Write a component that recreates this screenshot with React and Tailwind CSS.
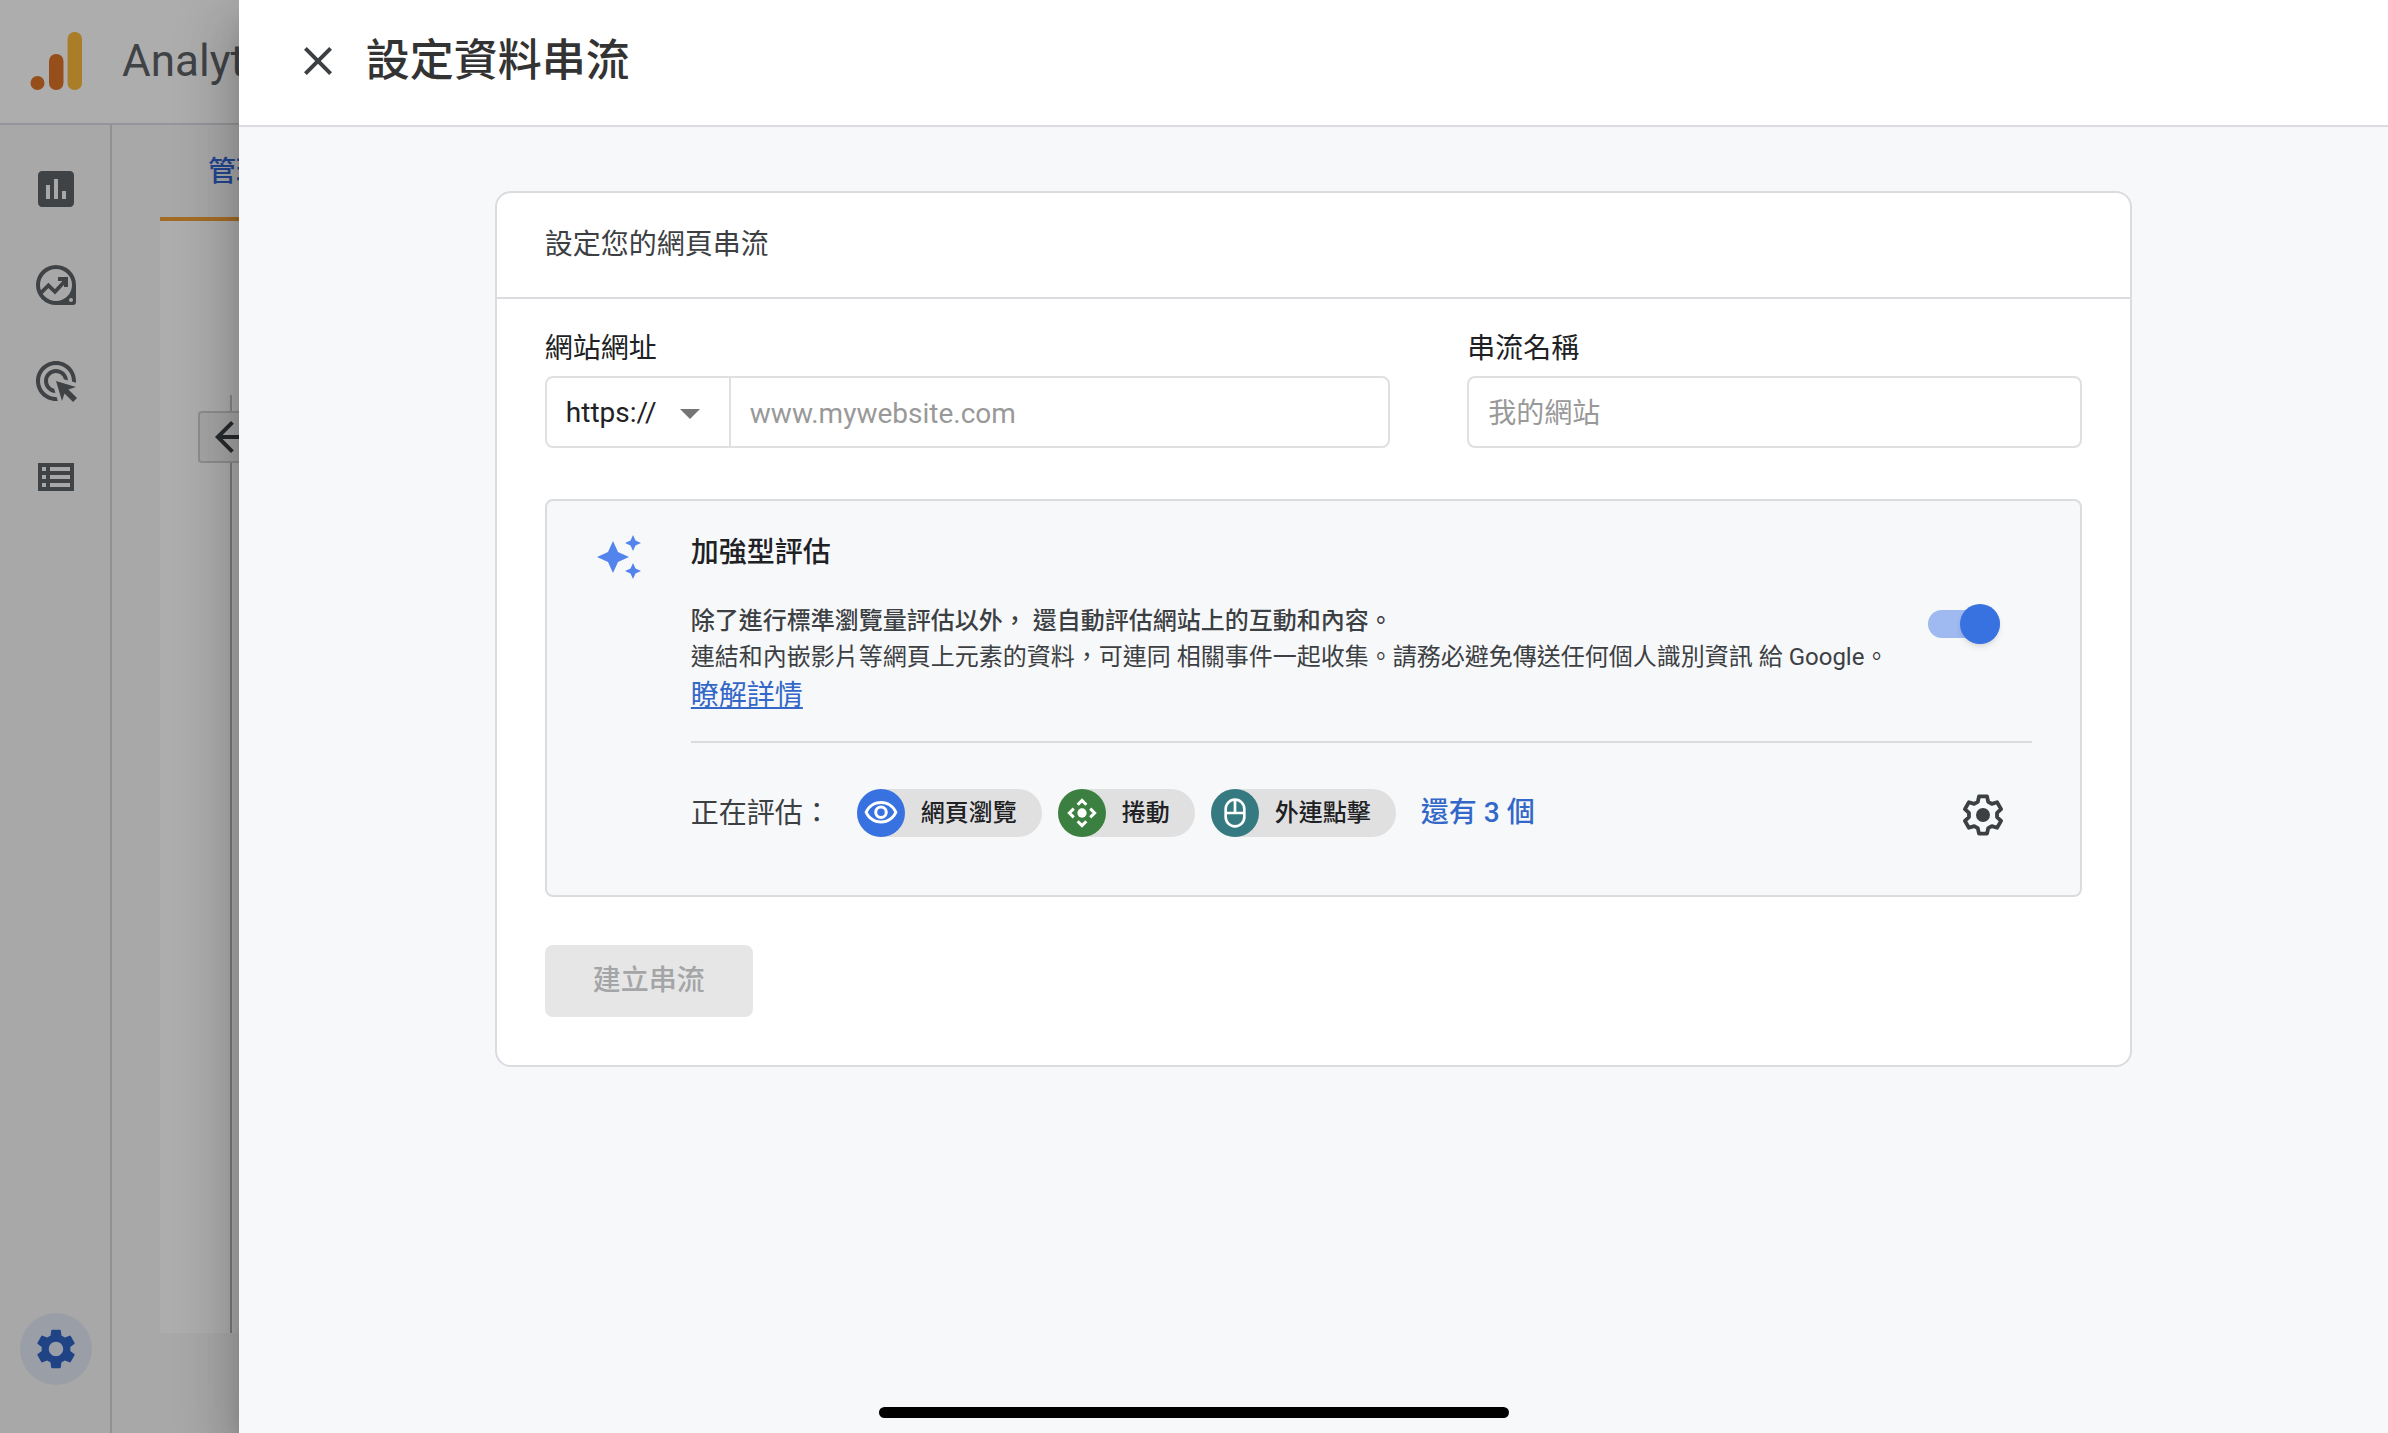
import { useState } from 'react'
import {
  MdAdsClick,
  MdArrowBack,
  MdArrowDropDown,
  MdAutoAwesome,
  MdClose,
  MdInsertChart,
  MdOutlineVisibility,
  MdSettings,
} from 'react-icons/md'

function AnalyticsLogo() {
  return (
    <svg viewBox="0 0 52 58" className="h-[58px] w-[52px]" aria-hidden="true">
      <circle cx="7.5" cy="51" r="7" fill="#dd7527" />
      <rect x="19" y="22" width="14.5" height="36" rx="7" fill="#dd7527" />
      <rect x="37.5" y="0" width="14.5" height="58" rx="7" fill="#fbb93c" />
    </svg>
  )
}

function ExploreIcon() {
  return (
    <svg viewBox="0 0 24 24" className="size-12" fill="currentColor" aria-hidden="true">
      <path
        fillRule="evenodd"
        d="M12 2a10 10 0 0 0 0 20h8.5a1.5 1.5 0 0 0 1.5-1.5V12A10 10 0 0 0 12 2zm0 2a8 8 0 1 1 0 16 8 8 0 0 1 0-16zm7.5 14.5a1 1 0 1 1 0 2 1 1 0 0 1 0-2z"
      />
      <path d="M4.6 15.8l3.6-3.6 3.3 3.2 5-5.4" fill="none" stroke="currentColor" strokeWidth="1.9" />
      <path d="M13 8h5v5z" />
      <path d="M13 8h5v5h-2v-3h-3z" />
    </svg>
  )
}

function ListIcon() {
  return (
    <svg viewBox="0 0 24 24" className="size-12" fill="currentColor" aria-hidden="true">
      <path
        fillRule="evenodd"
        d="M3 5h18v14H3zM5 7v2h2V7zm0 4v2h2v-2zm0 4v2h2v-2zM9 7v2h10V7zm0 4v2h10v-2zm0 4v2h10v-2z"
      />
    </svg>
  )
}

function GearIcon() {
  return (
    <svg viewBox="-12 -12 24 24" className="size-12" aria-hidden="true">
      <path
        d="M-2.6-6.6L-2-9.3H2L2.6-6.6 4.42-5.55 7.05-6.38 9.05-2.92 7.02-1.05V1.05L9.05 2.92 7.05 6.38 4.42 5.55 2.6 6.6 2 9.3H-2L-2.6 6.6-4.42 5.55-7.05 6.38-9.05 2.92-7.02 1.05V-1.05L-9.05-2.92-7.05-6.38-4.42-5.55z"
        fill="none"
        stroke="currentColor"
        strokeWidth="1.9"
        strokeLinejoin="round"
      />
      <circle r="3.5" fill="currentColor" />
    </svg>
  )
}

function ScrollIcon() {
  return (
    <svg viewBox="-12 -12 24 24" className="size-9" aria-hidden="true">
      <circle r="3.1" fill="currentColor" />
      <path
        d="M-2.9-5.5L0-8.4 2.9-5.5M-2.9 5.5L0 8.4 2.9 5.5M-5.5-2.9L-8.4 0-5.5 2.9M5.5-2.9L8.4 0 5.5 2.9"
        fill="none"
        stroke="currentColor"
        strokeWidth="2"
      />
    </svg>
  )
}

function MouseIcon() {
  return (
    <svg viewBox="0 0 24 24" className="size-8" fill="none" stroke="currentColor" strokeWidth="2" aria-hidden="true">
      <rect x="5" y="2" width="14" height="20" rx="7" />
      <path d="M5 12h14M12 2v10" />
    </svg>
  )
}

const navItems = [
  { label: '報表', icon: <MdInsertChart className="size-12" /> },
  { label: '探索', icon: <ExploreIcon /> },
  { label: '廣告', icon: <MdAdsClick className="size-12" /> },
  { label: '設定', icon: <ListIcon /> },
]

const chips = [
  { label: '網頁瀏覽', color: 'bg-[#3871e0]', icon: <MdOutlineVisibility className="size-9" /> },
  { label: '捲動', color: 'bg-[#3b8040]', icon: <ScrollIcon /> },
  { label: '外連點擊', color: 'bg-[#357a80]', icon: <MouseIcon /> },
]

function AppShell() {
  return (
    <div className="flex h-full flex-col bg-white">
      <header className="flex h-[125px] shrink-0 items-center gap-10 border-b-2 border-[#dadce0] pb-0.5 pl-[30px]">
        <AnalyticsLogo />
        <span className="text-[44px] leading-none text-[#5f6368]">Analytics</span>
      </header>
      <div className="flex min-h-0 flex-1 bg-[#f8f8f8]">
        <nav className="flex w-28 shrink-0 flex-col items-center border-r-2 border-[#d2d4d7] pt-4 pb-12 pl-0.5 text-[#5f6368]">
          {navItems.map(item => (
            <a key={item.label} href="#" aria-label={item.label} className="flex h-24 items-center">
              {item.icon}
            </a>
          ))}
          <a
            href="#"
            aria-label="管理"
            className="mt-auto flex size-[72px] items-center justify-center rounded-full bg-[#e4eaf6] text-[#3064c4]"
          >
            <MdSettings className="size-12" />
          </a>
        </nav>
        <main className="flex flex-1 flex-col pb-[100px] pl-12">
          <div className="flex">
            <a
              href="#"
              className="flex h-24 items-center border-b-4 border-[#f0a038] px-12 pt-0.5 text-[28px] font-medium text-[#3367d6]"
            >
              管理
            </a>
          </div>
          <div className="flex flex-1 bg-white pt-[174px] pl-[38px]">
            <div className="flex w-[66px] flex-col items-center">
              <div className="h-4 w-0.5 bg-[#c4c6c9]" />
              <button
                aria-label="返回"
                className="flex h-[52px] w-full items-center justify-center rounded-sm border-2 border-[#d0d0d0] bg-[#f4f4f4] text-[#3c4043]"
              >
                <MdArrowBack className="size-12 shrink-0" />
              </button>
              <div className="w-0.5 flex-1 bg-[#b4b6b9]" />
            </div>
          </div>
        </main>
      </div>
    </div>
  )
}

function EnhancedMeasurement() {
  const [enabled, setEnabled] = useState(true)
  return (
    <section className="mt-[51px] flex gap-12 rounded-lg border-2 border-[#dadce0] bg-[#f7f8fa] px-12 pt-8 pb-[58px]">
      <MdAutoAwesome className="size-12 shrink-0 text-[#5383ec]" />
      <div className="min-w-0 flex-1">
        <h3 className="text-[28px] leading-10 font-medium text-[#202124]">加強型評估</h3>
        <div className="mt-[30px] flex items-start justify-between border-b-2 border-[#dadce0] pb-6">
          <div className="text-2xl leading-9 text-[#3c4043]">
            <p className="font-medium">除了進行標準瀏覽量評估以外， 還自動評估網站上的互動和內容。</p>
            <p>連結和內嵌影片等網頁上元素的資料，可連同 相關事件一起收集。請務必避免傳送任何個人識別資訊 給 Google。</p>
            <a href="#" className="block w-fit text-[28px] leading-[42px] text-[#3367c8] underline">
              瞭解詳情
            </a>
          </div>
          <input
            type="checkbox"
            role="switch"
            aria-label="加強型評估"
            checked={enabled}
            onChange={e => setEnabled(e.target.checked)}
            className="mt-[7px] mr-8 flex h-7 w-[72px] shrink-0 appearance-none items-center rounded-full bg-gray-300 before:size-10 before:shrink-0 before:rounded-full before:bg-white before:shadow-md checked:justify-end checked:bg-[#9fb9f1] checked:before:bg-[#3871e0]"
          />
        </div>
        <div className="mt-[46px] flex h-12 items-center text-[28px]">
          <span className="pt-0.5 leading-10 text-[#3c4043]">正在評估：</span>
          <ul className="ml-[26px] flex gap-4">
            {chips.map(chip => (
              <li key={chip.label} className="flex h-12 items-center gap-4 rounded-full bg-[#e0e0e0] pr-[25px]">
                <span className={`flex size-12 items-center justify-center rounded-full text-white ${chip.color}`}>
                  {chip.icon}
                </span>
                <span className="text-2xl font-medium text-[#202124]">{chip.label}</span>
              </li>
            ))}
          </ul>
          <a href="#" className="ml-[25px] leading-10 font-medium text-[#3367c8]">還有 3 個</a>
          <button type="button" aria-label="設定" className="mr-[25px] ml-auto pt-1 text-[#3c4043]">
            <GearIcon />
          </button>
        </div>
      </div>
    </section>
  )
}

function StreamForm() {
  const [protocol, setProtocol] = useState('https://')
  const [url, setUrl] = useState('')
  const [name, setName] = useState('')
  return (
    <form className="rounded-2xl border-2 border-[#dadce0] bg-white text-[28px]" onSubmit={e => e.preventDefault()}>
      <h2 className="border-b-2 border-[#dadce0] px-12 py-8 leading-10 text-[#3c4043]">設定您的網頁串流</h2>
      <div className="px-12 pt-[34px] pb-12">
        <div className="flex justify-between">
          <div className="flex w-[55%] flex-col gap-[11px]">
            <label htmlFor="url" className="leading-8 text-[#202124]">網站網址</label>
            <div className="flex h-[72px] rounded-lg border-2 border-[#e0e0e0]">
              <div className="relative w-[184px] shrink-0 border-r-2 border-[#e0e0e0]">
                <select
                  aria-label="通訊協定"
                  value={protocol}
                  onChange={e => setProtocol(e.target.value)}
                  className="h-full w-full appearance-none pt-0.5 pl-[19px] text-[#202124]"
                >
                  <option>https://</option>
                  <option>http://</option>
                </select>
                <MdArrowDropDown className="pointer-events-none absolute top-0.5 right-[15px] bottom-0 my-auto size-12 text-[#757575]" />
              </div>
              <input
                id="url"
                value={url}
                onChange={e => setUrl(e.target.value)}
                placeholder="www.mywebsite.com"
                className="min-w-0 flex-1 px-[19px] pt-[3px] outline-none placeholder:text-[#999999]"
              />
            </div>
          </div>
          <div className="flex w-[40%] flex-col gap-[11px]">
            <label htmlFor="name" className="leading-8 text-[#202124]">串流名稱</label>
            <input
              id="name"
              value={name}
              onChange={e => setName(e.target.value)}
              placeholder="我的網站"
              className="h-[72px] rounded-lg border-2 border-[#e0e0e0] px-[19px] pt-[3px] outline-none placeholder:text-[#999999]"
            />
          </div>
        </div>
        <EnhancedMeasurement />
        <button
          disabled={!url || !name}
          className="mt-12 h-[72px] rounded-lg bg-[#1a73e8] px-12 font-medium text-white disabled:bg-[#e6e6e6] disabled:text-[#a3a5a7]"
        >
          建立串流
        </button>
      </div>
    </form>
  )
}

export default function App() {
  return (
    <div lang="zh-Hant" className="relative h-screen overflow-hidden font-['Roboto','Noto_Sans_CJK_TC',sans-serif]">
      <AppShell />
      <div className="absolute inset-0 bg-black/32" />
      <div
        role="dialog"
        aria-labelledby="drawer-title"
        className="absolute inset-y-0 right-0 flex w-[90%] flex-col bg-[#f7f8fa] shadow-[0_16px_20px_-10px_rgba(0,0,0,0.2),0_32px_48px_4px_rgba(0,0,0,0.14),0_12px_60px_10px_rgba(0,0,0,0.12)]"
      >
        <header className="flex h-[127px] shrink-0 items-center gap-6 border-b-2 border-[#dadce0] bg-white pb-1 pl-[55px]">
          <button type="button" aria-label="關閉" className="text-[#3c4043]">
            <MdClose className="size-12" />
          </button>
          <h1 id="drawer-title" className="text-[44px] leading-none font-medium text-[#333333]">設定資料串流</h1>
        </header>
        <div className="flex-1 px-64 pt-16">
          <StreamForm />
        </div>
      </div>
      <div className="absolute inset-x-0 bottom-[15px] mx-auto h-[11px] w-[630px] rounded-full bg-black" />
    </div>
  )
}
